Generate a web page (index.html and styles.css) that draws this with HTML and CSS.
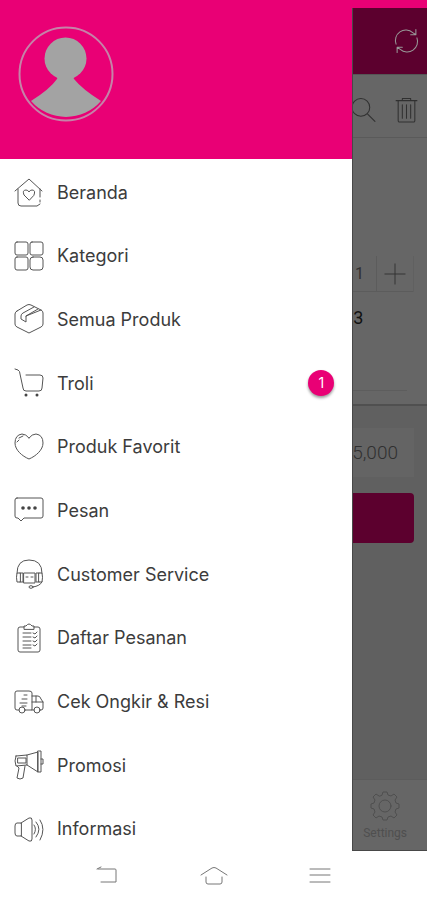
FILE: index.html
```html
<!DOCTYPE html>
<html lang="id">
<head>
<meta charset="utf-8">
<meta name="viewport" content="width=device-width, initial-scale=1">
<title>Menu</title>
<link rel="stylesheet" href="styles.css">
</head>
<body>
<div class="app">
  <aside class="drawer">
    <header class="profile">
      <svg class="avatar" viewBox="0 0 96 96" role="img" aria-label="Profil">
        <circle cx="48" cy="48" r="46.5" fill="none" stroke="#c583a8" stroke-width="2"/>
        <g fill="#a3a3a3" stroke="none">
          <circle cx="47.500" cy="32.500" r="21"/>
          <path d="M38 49Q40 51 39 53Q32 63 13 75A46.500 46.500 0 0 0 83 75Q64 63 56 53Q55 51 57 49Z"/>
        </g>
      </svg>
    </header>
    <nav class="menu">
      <a class="item" href="#"><svg class="icon" viewBox="0 0 30 30"><path d="M1 14L15 2L28 14M4 12V26Q4 29 7 29H23L26 27M26 12V20M26 23V25M15 23L10 18Q8 13 12 13Q14 13 15 15Q16 13 18 13Q22 13 20 18Z"/></svg><span>Beranda</span></a>
      <a class="item" href="#"><svg class="icon" viewBox="0 0 30 30"><rect x="1" y="1" width="13" height="13" rx="2"/><rect x="16" y="1" width="13" height="13" rx="2"/><rect x="1" y="16" width="13" height="13" rx="2"/><rect x="16" y="16" width="13" height="13" rx="3"/></svg><span>Kategori</span></a>
      <a class="item" href="#"><svg class="icon" viewBox="0 0 30 30"><path d="M3 7L13 1Q15 0 17 1L27 6Q29 7 29 9V20Q29 22 27 23L17 28Q15 30 13 28L3 23Q1 22 1 20V10Q1 8 3 7ZM20 3L9 9Q7 10 7 12V15L12 18V12L27 6M12 12L24 5"/></svg><span>Semua Produk</span></a>
      <a class="item" href="#"><svg class="icon" viewBox="0 0 30 30"><path d="M1 1L4 2Q6 3 6 6L9 20Q9 23 12 23H25Q28 23 28 20L29 10Q29 7 26 7H12"/><circle class="solid" cx="12" cy="27" r="1.5"/><circle class="solid" cx="23" cy="27" r="1.5"/></svg><span>Troli</span><b class="badge">1</b></a>
      <a class="item" href="#"><svg class="icon" viewBox="0 0 30 30"><path d="M15 6Q12 2 8 2Q1 3 1 11C1 18 8 24 15 27C22 24 29 18 29 11Q29 3 22 2Q18 2 15 6M3 10L5 8M5 6L9 4"/></svg><span>Produk Favorit</span></a>
      <a class="item" href="#"><svg class="icon" viewBox="0 0 30 30"><path d="M3 3H27Q29 3 29 5V21Q29 23 27 23H10L7 26L4 23H3Q1 23 1 21V5Q1 3 3 3Z"/><g class="solid"><circle cx="9" cy="13" r="1.800"/><circle cx="15" cy="13" r="1.800"/><circle cx="21" cy="13" r="1.800"/></g></svg><span>Pesan</span></a>
      <a class="item" href="#"><svg class="icon" viewBox="0 0 30 30"><path d="M3 14Q3 1 15 1Q28 1 28 14M6 14H3Q2 18 3 23H6ZM25 14H28Q29 18 28 23H25ZM6 14H9V23H6M25 14H22V23H25M10 14H21V24H10ZM12 18H14M17 18H19M28 23Q26 27 19 28"/><ellipse cx="17" cy="28" rx="2" ry="1.300"/></svg><span>Customer Service</span></a>
      <a class="item" href="#"><svg class="icon" viewBox="0 0 30 30"><path d="M10 4H6Q4 4 4 6V27Q4 29 6 29H24Q26 29 26 27V6Q26 4 24 4H20M10 6V3H12Q15-1 18 3H20V6ZM9 10H17M9 14H17M9 18H17M9 22H17M9 25H17M19 10L21 11L23 9M19 14L21 15L23 13M19 18L21 19L23 17M19 22L21 23L23 21"/></svg><span>Daftar Pesanan</span></a>
      <a class="item" href="#"><svg class="icon" viewBox="0 0 30 30"><path d="M5 23H3Q1 23 1 21V6Q1 4 3 4H15Q18 4 18 6V23H11M18 9H24Q26 9 27 12L29 15V21Q29 23 27 23H26M18 15H29M22 9V15M20 23H18M10 8H13M8 12H13M6 16H13M8 19H12"/><circle cx="8" cy="23" r="3"/><circle cx="23" cy="23" r="3"/></svg><span>Cek Ongkir &amp; Resi</span></a>
      <a class="item" href="#"><svg class="icon" viewBox="0 0 30 30"><path d="M2 6L13 5V15L2 16Q0 11 2 6ZM4 8H12V13H4ZM13 5L24 2V22L13 15M24 1H27V22H24ZM27 9H29V14H27M3 16L5 18L3 28Q6 30 9 28L11 16"/></svg><span>Promosi</span></a>
      <a class="item" href="#"><svg class="icon" viewBox="0 0 30 30"><path d="M7 9H3Q1 9 1 12V19Q1 22 3 22H7ZM7 9L15 4Q18 3 18 6V25Q18 28 15 27L7 22M20 11Q23 15 20 20M22 8Q28 15 22 23M26 6Q32 15 26 26"/></svg><span>Informasi</span></a>
    </nav>
  </aside>
  <main class="page">
    <header class="topbar">
      <button class="tool" aria-label="Muat ulang"><svg viewBox="0 0 24 24"><path d="M2 15A10 10 0 0 1 18 4L21 6M21 1V6H16M22 9A10 10 0 0 1 6 20L3 18M3 23V18H8"/></svg></button>
    </header>
    <div class="toolbar">
      <button class="tool" aria-label="Cari"><svg viewBox="0 0 24 24"><circle cx="9.500" cy="9.500" r="8.500"/><path d="M16 16L23 23"/></svg></button>
      <button class="tool" aria-label="Hapus"><svg viewBox="0 0 24 24"><path d="M3 3H21M2 3H22M8 3V1H16V3M4 3V22Q4 24 6 23.500H18Q20 24 20 22V3M8 7V20M12 7V20M16 7V20"/></svg></button>
    </div>
    <section class="product">
      <div class="stepper"><span class="qty">1</span><button class="plus" aria-label="Tambah"><svg viewBox="0 0 24 24"><path d="M1 12H23M12 1V23"/></svg></button></div>
      <p class="code">3</p>
      <hr class="rule">
    </section>
    <section class="summary">
      <p class="price">5,000</p>
      <button class="checkout" aria-label="Checkout"></button>
    </section>
    <a class="settings" href="#"><svg viewBox="0 0 30 30"><path d="M12 4L13 1H17L18 4L21 5L24 3L27 6L25 9L26 12L29 13V17L26 18L25 21L27 24L24 27L21 25L18 26L17 29H13L12 26L9 25L6 27L3 24L5 21L4 18L1 17V13L4 12L5 9L3 6L6 3L9 5Z"/><circle cx="15" cy="15" r="6"/></svg><span>Settings</span></a>
  </main>
</div>
<footer class="system">
  <button aria-label="Kembali"><svg viewBox="0 0 28 24"><path d="M5 5H22Q23 5 23 6V18H8M8 3L4 5"/></svg></button>
  <button aria-label="Layar utama"><svg viewBox="0 0 28 24"><path d="M1 11L12 4Q14 3 16 4L27 11M6 13V18Q6 20 8 20H20Q22 20 22 18V13"/></svg></button>
  <button aria-label="Aplikasi terbaru"><svg viewBox="0 0 28 24"><path d="M4 5H24M4 11H24M4 18H24"/></svg></button>
</footer>
</body>
</html>
```
FILE: styles.css
```css
* { box-sizing: border-box; }

body {
  margin: 0;
  height: 100vh;
  min-height: 720px;
  display: flex;
  flex-direction: column;
  background: #fff;
  color: #3c3c3c;
  font-family: Roboto, "Liberation Sans", sans-serif;
}

button {
  margin: 0;
  padding: 0;
  border: 0;
  background: none;
  color: inherit;
  font: inherit;
}

a { color: inherit; text-decoration: none; }
p { margin: 0; }

svg {
  display: block;
  fill: none;
  stroke: currentColor;
  stroke-linejoin: round;
  stroke-linecap: round;
}

.app {
  flex: 1;
  min-height: 0;
  display: flex;
  background: #e90075;
}

.drawer {
  flex: 0 0 82.5%;
  display: flex;
  flex-direction: column;
  background: #fff;
}

.profile {
  height: 159px;
  padding: 26px 18px;
  background: #e90075;
}

.avatar { width: 96px; height: 96px; }

.menu {
  flex: 1;
  display: flex;
  flex-direction: column;
  justify-content: space-between;
  padding-top: 11px;
}

.item {
  height: 44px;
  display: flex;
  align-items: center;
  padding: 0 18px 0 14px;
  gap: 13px;
  font-family: Inter, Roboto, sans-serif;
  font-size: 18px;
  font-weight: 400;
}

.icon { width: 30px; height: 30px; color: #555; }
.icon .solid { fill: #444; stroke: none; }

.badge {
  width: 26px;
  height: 26px;
  margin-left: auto;
  border-radius: 50%;
  background: #e90075;
  box-shadow: 0 2px 3px #0006;
  color: #fff;
  font-size: 14px;
  font-weight: 400;
  line-height: 26px;
  text-align: center;
}

.page {
  flex: 1;
  min-width: 0;
  margin-top: 8px;
  display: flex;
  flex-direction: column;
  overflow: hidden;
  border-left: 1px solid #484848;
  border-bottom: 1px solid #484848;
  background: #606060;
  color: #303030;
}

.topbar, .toolbar {
  display: flex;
  align-items: center;
  justify-content: flex-end;
  padding-right: 8px;
  gap: 18px;
}

.topbar { height: 66px; background: #5c002e; color: #999; }

.toolbar {
  height: 64px;
  padding-top: 7px;
  border-top: 1px solid #555;
  border-bottom: 1px solid #5a5a5a;
  background: #666;
}

.tool { flex: none; }
.tool svg { width: 25px; height: 26px; }

.product {
  height: 268px;
  padding: 118px 13px 0 0;
  border-bottom: 2px solid #505050;
  background: #666;
}

.stepper {
  display: flex;
  align-items: center;
  justify-content: flex-end;
  height: 36px;
  border-bottom: 1px solid #5c5c5c;
}

.qty { padding-right: 12px; font-size: 16px; }

.plus {
  height: 36px;
  padding: 0 7px;
  border-left: 1px solid #5c5c5c;
  border-right: 1px solid #606060;
}

.plus svg { width: 22px; height: 22px; }

.code {
  padding-top: 14px;
  padding-right: 55px;
  font-size: 18px;
  line-height: 24px;
  text-align: right;
  color: #111;
}

.rule { margin: 60px 7px 0 0; border: 0; border-top: 1px solid #5d5d5d; }

.summary {
  flex: 1;
  padding: 22px 13px 0 0;
  display: flex;
  flex-direction: column;
  gap: 16px;
}

.price {
  display: flex;
  justify-content: flex-end;
  height: 49px;
  padding-right: 16px;
  background: #646464;
  font-size: 19px;
  font-weight: 300;
  line-height: 49px;
}

.checkout { height: 50px; border-radius: 0 4px 4px 0; background: #5c002e; }

.settings {
  height: 71px;
  padding: 11px 10px 0 0;
  display: flex;
  flex-direction: column;
  align-items: center;
  gap: 4px;
  border-top: 1px solid #5c5c5c;
  background: #666;
  color: #4f4f4f;
  font-size: 12px;
  line-height: 16px;
}

.settings svg { width: 30px; height: 30px; }

.system {
  flex: none;
  height: 49px;
  display: flex;
  align-items: center;
  padding: 0 12.5%;
  color: #777;
}

.system button { flex: 1; display: flex; justify-content: center; }
.system svg { width: 28px; height: 24px; }
```
